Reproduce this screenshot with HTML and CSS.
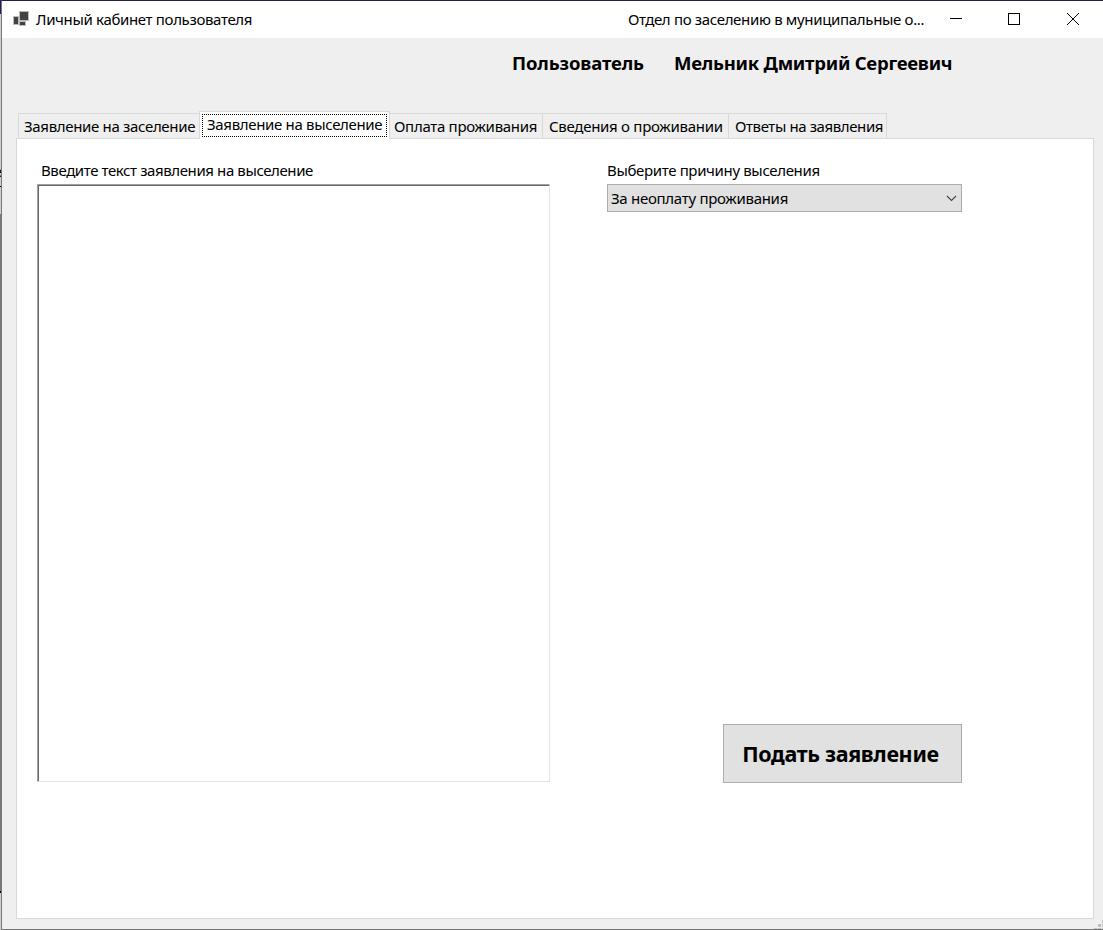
FILE: index.html
```html
<!DOCTYPE html>
<html lang="ru">
<head>
<meta charset="utf-8">
<title>Личный кабинет пользователя</title>
<link rel="stylesheet" href="styles.css">
</head>
<body>
<div class="desktop">
  <div class="backdrop"><span class="backdrop-letter">е</span></div>
  <main class="window">
    <header class="titlebar">
      <svg class="app-icon" width="16" height="16" viewBox="0 0 16 16"><path fill="#bdbdbd" d="M6 0h10v10h-3v5H6v-1H0V5h6z"/><path fill="#424242" d="M7 1h8v8H7zM1 6h4v7H1zM7 11h5v3H7z"/></svg>
      <h1 class="title"><span class="t-title">Личный кабинет пользователя</span></h1>
      <span class="subtitle"><span class="t-sub">Отдел по заселению в муниципальные о...</span></span>
      <svg class="controls" width="131" height="16" viewBox="0 0 131 16" fill="none" stroke="#000" shape-rendering="crispEdges"><path d="M0 7.5h12M58.500 2.500h11v11h-11z"/><path shape-rendering="auto" d="M117 2l12 12M129 2l-12 12"/></svg>
    </header>
    <div class="userbar">
      <span class="role"><span class="t-role">Пользователь</span></span>
      <span class="name"><span class="t-name">Мельник Дмитрий Сергеевич</span></span>
    </div>
    <nav class="tabs">
      <div class="tab tab-in"><span class="t-tab1">Заявление на заселение</span></div>
      <div class="tab tab-active"><div class="focus"><span class="t-tab2">Заявление на выселение</span></div></div>
      <div class="tab tab-pay"><span class="t-tab3">Оплата проживания</span></div>
      <div class="tab tab-info"><span class="t-tab4">Сведения о проживании</span></div>
      <div class="tab tab-answers"><span class="t-tab5">Ответы на заявления</span></div>
    </nav>
    <section class="page">
      <div class="request">
        <label class="label label-text"><span class="t-lab1">Введите текст заявления на выселение</span></label>
        <div class="textbox"></div>
      </div>
      <div class="side">
        <label class="label"><span class="t-lab2">Выберите причину выселения</span></label>
        <div class="select"><span class="t-sel">За неоплату проживания</span>
          <svg width="11" height="7" viewBox="0 0 11 7" fill="none" stroke="#444" stroke-width="1.1"><path d="M1 1l4.500 4.500L10 1"/></svg>
        </div>
        <button class="submit"><span class="t-btn">Подать заявление</span></button>
      </div>
    </section>
    <svg class="grip" width="9" height="9" viewBox="0 0 9 9" fill="#bdbdbd"><path d="M8 0h1v3H8zM4 4h3v3H4zM8 4h1v3H8zM0 8h3v1H0zM4 8h3v1H4zM8 8h1v1H8z"/></svg>
  </main>
</div>
</body>
</html>
```
FILE: styles.css
```css
* { box-sizing: border-box; }
body {
  margin: 0;
  overflow: hidden;
  font: 15px/20px "Noto Sans", sans-serif;
  color: #000;
}
.desktop { display: flex; width: 1103px; height: 930px; }
.backdrop {
  width: 1px;
  overflow: hidden;
  padding-top: 161px;
  background: linear-gradient(#251a6c 0 14px, #d0d0d0 14px 186px, #000 186px 187px, #d0d0d0 187px 214px, #777 214px 891px, #000 891px 893px, #d0d0d0 893px);
}
.backdrop-letter { display: block; margin-left: -6px; }
.window {
  position: relative;
  width: 1102px;
  height: 930px;
  background: #efefef;
  border: solid #777;
  border-width: 1px 0 1px 1px;
  border-top-color: #251d48;
}
.titlebar { display: flex; height: 37px; background: #fff; align-items: flex-start; }
.app-icon { margin: 10px 7px 0 11px; }
.title { width: 592px; margin: 8px 0 0; font-size: 15px; font-weight: 400; }
.subtitle { width: 322px; margin-top: 8px; }
.controls { margin-top: 10px; }
.titlebar, .tabs, .userbar, .label, .select { white-space: nowrap; }
.userbar {
  display: flex;
  height: 73px;
  padding: 12px 0 0 510px;
  font-size: 18.500px;
  line-height: 26px;
  font-weight: 700;
}
.role { width: 162px; }
.tabs { display: flex; height: 27px; padding-left: 16px; align-items: flex-end; }
.tab {
  height: 25px;
  padding: 2px 0 0 5px;
  border: 1px solid #d9d9d9;
  border-width: 1px 1px 0 0;
}
.tab-in { width: 181px; border-width: 1px 0 0 1px; }
.tab-active {
  position: relative;
  width: 191px;
  height: 28px;
  margin-bottom: -1px;
  padding: 2px;
  background: #fff;
  border-width: 1px 1px 0;
}
.focus {
  width: 185px;
  height: 23px;
  padding-left: 4px;
  border: 1px dotted #000;
  line-height: 18px;
}
.tab-pay { width: 153px; padding-left: 4px; }
.tab-info { width: 186px; padding-left: 6px; }
.tab-answers { width: 158px; padding-left: 6px; }
.page {
  display: flex;
  width: 1078px;
  height: 781px;
  margin-left: 14px;
  padding: 21px 0 0 20px;
  background: #fff;
  border: 1px solid #d9d9d9;
}
.request { width: 570px; }
.label { display: block; height: 24px; }
.label-text { padding-left: 4px; }
.textbox {
  width: 513px;
  height: 598px;
  border: 1px solid #e3e3e3;
  border-top-color: #a0a0a0;
  border-left-color: #a0a0a0;
  box-shadow: inset 1px 1px #696969;
}
.side { display: flex; flex-direction: column; width: 355px; height: 623px; }
.select {
  display: flex;
  justify-content: space-between;
  align-items: center;
  height: 28px;
  padding: 0 4px 0 3px;
  background: #e1e1e1;
  border: 1px solid #adadad;
}
.select span { margin-top: -1px; }
.submit {
  width: 239px;
  height: 59px;
  margin: auto 0 0 auto;
  padding: 0 4px 0 0;
  background: #e1e1e1;
  border: 1px solid #adadad;
  border-radius: 0;
  color: #000;
  font: 700 21.500px/28px "Noto Sans", sans-serif;
  white-space: nowrap;
}
.grip { position: absolute; right: 0; bottom: 0; }

/* Tracking per caption */
.t-title { letter-spacing: -0.34px; }
.t-sub { letter-spacing: -0.33px; }
.t-role { letter-spacing: -0.12px; }
.t-name { letter-spacing: -0.25px; }
.t-tab1 { letter-spacing: -0.33px; }
.t-tab2 { letter-spacing: -0.33px; }
.t-tab3 { letter-spacing: -0.3px; }
.t-tab4 { letter-spacing: -0.28px; }
.t-tab5 { letter-spacing: -0.4px; }
.t-lab1 { letter-spacing: -0.4px; }
.t-lab2 { letter-spacing: -0.35px; }
.t-sel { letter-spacing: -0.29px; }
.t-btn { letter-spacing: -0.32px; }
```
